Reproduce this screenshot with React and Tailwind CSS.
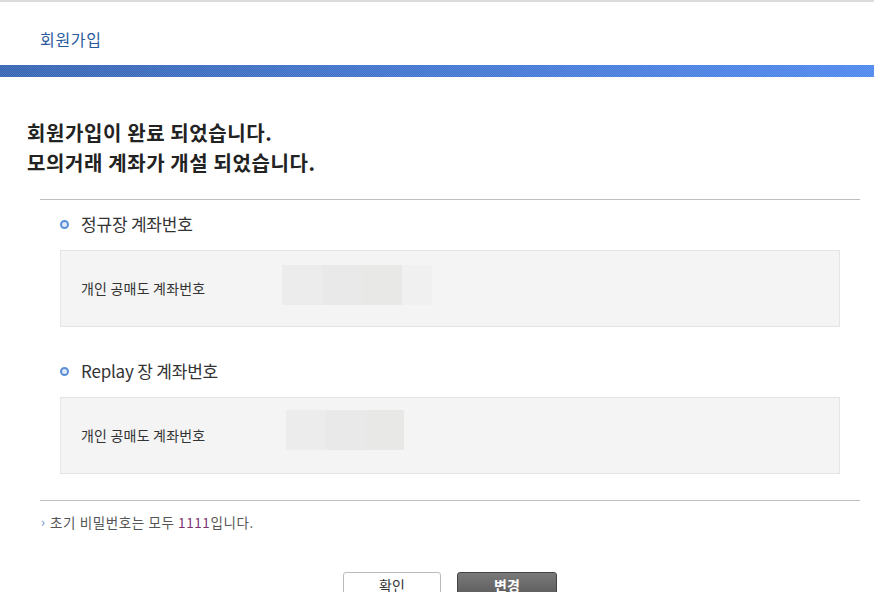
import React from 'react'

const FONT = { fontFamily: '"Noto Sans CJK KR", "Noto Sans", sans-serif' }

function Bullet() {
  return (
    <span className="w-[9px] h-[9px] rounded-full border-[2.5px] border-[#5a8fd8] bg-[#dfe9f8] shrink-0" />
  )
}

function AccountBox({ offset, blocks }) {
  return (
    <div className="mx-5 h-[77px] bg-[#f4f4f4] border border-[#e4e4e4] flex items-center pl-5">
      <span className="w-[201px] text-[14px] text-[#333] tracking-[0.2px]">개인 공매도 계좌번호</span>
      <div className={`flex h-10 self-start ${offset}`}>
        {blocks.map((b, i) => (
          <div key={i} className={`h-10 ${b}`} />
        ))}
      </div>
    </div>
  )
}

export default function App() {
  return (
    <div className="w-[874px] h-[592px] overflow-hidden bg-white" style={FONT}>
      {/* top line + header */}
      <div className="h-[2px] bg-[#dcdcdc]" />
      <div className="h-[63px] flex items-center pl-10 pt-[10px]">
        <h1 className="text-[16px] text-[#2a5a9c] tracking-[0.7px]">회원가입</h1>
      </div>
      <div className="h-3 bg-linear-to-r from-[#3463b3] to-[#4d87ee]">
        <div className="h-full bg-[repeating-conic-gradient(rgba(255,255,255,0.12)_0_25%,transparent_0_50%)] bg-[length:2px_2px]" />
      </div>

      {/* message */}
      <div className="pl-[27px] pt-[41px]">
        <p className="text-[20px] leading-[30px] font-bold text-[#222] tracking-[0.6px]">회원가입이 완료 되었습니다.</p>
        <p className="text-[20px] leading-[30px] font-bold text-[#222] tracking-[0.6px]">모의거래 계좌가 개설 되었습니다.</p>
      </div>

      <div className="ml-10 mr-[14px] mt-[21px] border-t border-[#bdbdbd]">
        <div className="flex items-center gap-[12px] pl-5 mt-3 h-6">
          <Bullet />
          <span className="text-[17px] text-[#333] tracking-[-0.2px]">정규장 계좌번호</span>
        </div>
        <div className="mt-[14px]">
          <AccountBox
            offset="mt-[14px]"
            blocks={['w-10 bg-[#ececec]', 'w-10 bg-[#e9e9e9]', 'w-10 bg-[#e8e8e6]', 'w-[30px] bg-[#f0f0f0]']}
          />
        </div>

        <div className="flex items-center gap-[12px] pl-5 mt-8 h-6">
          <Bullet />
          <span className="text-[17px] text-[#333] tracking-[-0.2px]">Replay 장 계좌번호</span>
        </div>
        <div className="mt-[14px]">
          <AccountBox
            offset="mt-3 ml-1"
            blocks={['w-10 bg-[#ececec]', 'w-10 bg-[#e9e9e9]', 'w-[38px] bg-[#e8e8e6]']}
          />
        </div>

        <div className="mt-[26px] border-t border-[#bdbdbd]">
          <div className="flex items-center h-5 mt-[11px] text-[13.5px] text-[#555] tracking-[0.6px]">
            <span className="text-[#6a8fc8] text-[13px] leading-none w-[10px] pl-[1px] pb-[2px]">›</span>
            <span>
              초기 비밀번호는 모두 <span className="text-[#7b3470]">1111</span>입니다.
            </span>
          </div>
        </div>

        <div className="flex justify-center gap-4 mt-10">
          <button className="w-[98px] h-[30px] bg-white border border-[#bcbcbc] rounded-[3px] text-[14px] text-[#333] leading-none pb-1">
            확인
          </button>
          <button className="w-[100px] h-[30px] bg-linear-to-b from-[#7a7a7a] to-[#555] border border-[#444] rounded-[3px] text-[14px] font-bold text-white leading-none pb-1">
            변경
          </button>
        </div>
      </div>
    </div>
  )
}
